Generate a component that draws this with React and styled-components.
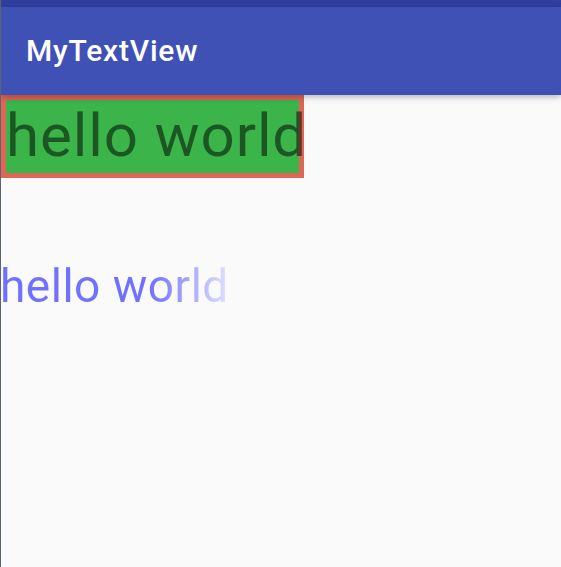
import React from 'react';
import styled, { createGlobalStyle } from 'styled-components';

const GlobalStyle = createGlobalStyle`
	html, body {
		margin: 0;
		padding: 0;
		background: #fafafa;
	}
	body {
		font-family: Roboto, "Noto Sans", sans-serif;
	}
`;

const Screen = styled.div`
	width: 561px;
	height: 567px;
	box-sizing: border-box;
	border-left: 1px solid #5a6470;
	background: #fafafa;
	overflow: hidden;
	display: flex;
	flex-direction: column;
`;

const StatusBar = styled.div`
	height: 7px;
	background: #303f9f;
	flex: none;
`;

const AppBar = styled.header`
	position: relative;
	z-index: 2;
	height: 88px;
	flex: none;
	display: flex;
	align-items: center;
	padding: 0 0 2px 25px;
	box-sizing: border-box;
	background: #3f51b5;
	box-shadow: 0 2px 6px rgba(0, 0, 0, 0.28);
	.title {
		margin: 0;
		color: #fff;
		font-size: 30px;
		font-weight: 500;
		letter-spacing: 0.8px;
	}
`;

const Content = styled.main`
	display: flex;
	flex-direction: column;
	align-items: flex-start;
	gap: 81px;
`;

const BoxedText = styled.div`
	width: 303px;
	height: 83px;
	box-sizing: border-box;
	padding: 6px 0 0 5px;
	overflow: hidden;
	white-space: nowrap;
	background: #3bb44a;
	box-shadow: inset 0 0 0 5px #df6556;
	color: rgba(0, 0, 0, 0.52);
	font-size: 60px;
	line-height: 70px;
	letter-spacing: 0.9px;
`;

const ShimmerText = styled.div`
	margin-left: -1px;
	font-size: 46px;
	line-height: 54px;
	letter-spacing: 0.5px;
	white-space: nowrap;
	background: linear-gradient(90deg, #7171ff 0, #7171ff 150px, #dcdcff 226px);
	-webkit-background-clip: text;
	background-clip: text;
	color: transparent;
`;

export default function App() {
	return (
		<>
			<GlobalStyle />
			<Screen>
				<StatusBar />
				<AppBar>
					<h1 className="title">MyTextView</h1>
				</AppBar>
				<Content>
					<BoxedText>hello world</BoxedText>
					<ShimmerText>hello world</ShimmerText>
				</Content>
			</Screen>
		</>
	);
}
